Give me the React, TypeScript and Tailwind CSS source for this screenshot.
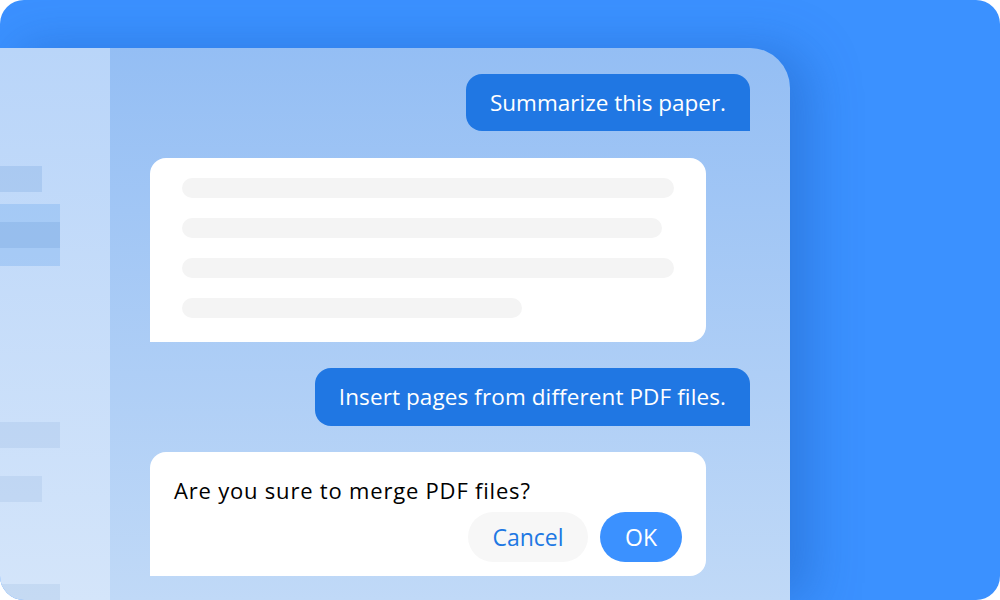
export default function App() {
  const font = { fontFamily: '"Open Sans", "Noto Sans", sans-serif' };

  return (
    <div className="w-[1000px] h-[600px] bg-white" style={font}>
      <div className="w-full h-full bg-[#3b91ff] rounded-[24px] overflow-hidden pt-[48px]">
        <div className="w-[790px] h-[552px] flex rounded-tr-[40px] overflow-hidden shadow-[20px_0_50px_rgba(20,80,170,0.35)]">
          {/* sidebar */}
          <div className="w-[110px] h-full flex flex-col bg-gradient-to-b from-[#b9d5f9] to-[#d4e5fa]">
            <div className="mt-[118px] w-[42px] h-[26px] bg-[#5b8fd0]/20" />
            <div className="mt-[12px] w-[60px] h-[62px] bg-[#8ab9f2]/50 flex items-center">
              <div className="w-full h-[26px] bg-[#6b9ad6]/25" />
            </div>
            <div className="mt-[156px] w-[60px] h-[26px] bg-[#6f9bd3]/15" />
            <div className="mt-[28px] w-[42px] h-[26px] bg-[#6f9bd3]/15" />
            <div className="mt-[82px] w-[60px] flex-1 bg-[#6f9bd3]/15" />
          </div>

          {/* chat */}
          <div className="flex-1 flex flex-col pl-[40px] pr-[40px] pt-[26px] bg-gradient-to-b from-[#94bef4] to-[#c0d9f7]">
            <div className="self-end h-[57px] flex items-center px-6 bg-[#2077e3] text-white text-[22.5px] rounded-t-[16px] rounded-bl-[16px]">
              Summarize this paper.
            </div>

            <div className="mt-[27px] w-[556px] bg-white rounded-t-[16px] rounded-br-[16px] px-8 pt-5 pb-6 flex flex-col gap-5">
              <div className="h-5 w-[492px] rounded-full bg-[#f4f4f4]" />
              <div className="h-5 w-[480px] rounded-full bg-[#f4f4f4]" />
              <div className="h-5 w-[492px] rounded-full bg-[#f4f4f4]" />
              <div className="h-5 w-[340px] rounded-full bg-[#f4f4f4]" />
            </div>

            <div className="mt-[26px] self-end h-[58px] flex items-center px-6 bg-[#2077e3] text-white text-[22.5px] tracking-[0.1px] rounded-t-[16px] rounded-bl-[16px]">
              Insert pages from different PDF files.
            </div>

            <div className="mt-[26px] w-[556px] h-[124px] bg-white rounded-t-[16px] rounded-br-[16px] pl-6 pr-6 pt-[22px] flex flex-col">
              <div className="text-[22px] leading-[32px] tracking-[0.8px] text-black">Are you sure to merge PDF files?</div>
              <div className="mt-[6px] flex justify-end gap-3">
                <button className="w-[120px] h-[50px] rounded-full bg-[#f7f7f7] text-[#2077e3] text-[23px]">
                  Cancel
                </button>
                <button className="w-[82px] h-[50px] rounded-full bg-[#3b91ff] text-white text-[23px]">
                  OK
                </button>
              </div>
            </div>
          </div>
        </div>
      </div>
    </div>
  );
}
